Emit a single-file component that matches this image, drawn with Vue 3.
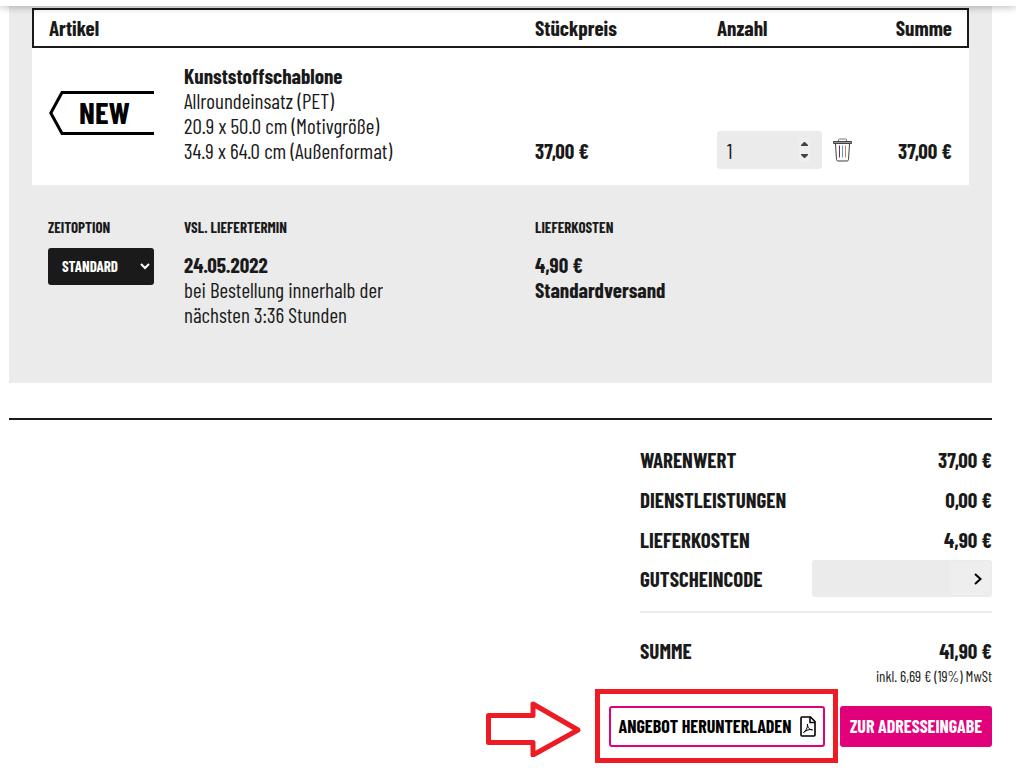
<script setup>
import { ref } from 'vue'

const quantity = ref(1)
const timeOption = ref('STANDARD')
const voucher = ref('')
const totals = [
  { label: 'WARENWERT', value: '37,00 €' },
  { label: 'DIENSTLEISTUNGEN', value: '0,00 €' },
  { label: 'LIEFERKOSTEN', value: '4,90 €' },
]
</script>

<template>
  <div class="page">
    <header class="topbar"></header>
    <main class="content">
      <section class="panel">
        <table class="cart">
          <colgroup>
            <col class="col-image" />
            <col />
            <col class="col-price" />
            <col class="col-qty" />
            <col class="col-sum" />
          </colgroup>
          <thead>
            <tr>
              <th colspan="2" scope="col">Artikel</th>
              <th scope="col">Stückpreis</th>
              <th scope="col">Anzahl</th>
              <th scope="col" class="right">Summe</th>
            </tr>
          </thead>
          <tbody>
            <tr>
              <td class="image-cell">
                <svg class="product" width="105" height="46" viewBox="0 0 105 46" role="img" aria-label="NEW">
                  <path d="M105 1.500H13L1.800 22l11.200 20.500H105" fill="none" stroke="#000" stroke-width="3" />
                  <text x="30" y="33" class="product-text">NEW</text>
                </svg>
              </td>
              <td>
                <strong>Kunststoffschablone</strong><br />
                Allroundeinsatz (PET)<br />
                20.9 x 50.0 cm (Motivgröße)<br />
                34.9 x 64.0 cm (Außenformat)
              </td>
              <td><strong>37,00 €</strong></td>
              <td class="qty-cell">
                <div class="qty">
                  <div class="stepper">
                    <input v-model="quantity" type="number" min="1" aria-label="Anzahl" />
                    <div class="steps">
                      <button type="button" aria-label="Mehr" @click="quantity++">
                        <svg width="7" height="4" viewBox="0 0 7 4"><path d="M0 4V3L3 0h1l3 3v1z" fill="#444" /></svg>
                      </button>
                      <button type="button" aria-label="Weniger" @click="quantity = Math.max(1, quantity - 1)">
                        <svg width="7" height="4" viewBox="0 0 7 4"><path d="M0 0v1l3 3h1l3-3V0z" fill="#444" /></svg>
                      </button>
                    </div>
                  </div>
                  <button type="button" class="trash" aria-label="Artikel entfernen">
                    <svg width="20" height="24" viewBox="0 0 20 24" fill="none" stroke="#444">
                      <path d="M5.500 3V2q0-1 1-1h6q1 0 1 1v1" stroke="#777" />
                      <path d="M.5 3.500h18v2H.5z" fill="#999" />
                      <path d="M2.500 6l1 15.500q.1 1.500 1.500 1.500h9q1.400 0 1.500-1.500l1-15.500" />
                      <path d="M4.500 22.500h10" stroke="#999" />
                      <path d="M6.500 7.500v12" stroke="#703070" />
                      <path d="M12.500 7.500v12" stroke="#c08a50" />
                      <path d="M9.500 7.500v12" stroke="#4f9fe0" />
                    </svg>
                  </button>
                </div>
              </td>
              <td class="right"><strong>37,00 €</strong></td>
            </tr>
          </tbody>
        </table>

        <div class="options">
          <div>
            <label class="caption" for="time-option">ZEITOPTION</label>
            <div class="select">
              <select id="time-option" v-model="timeOption">
                <option>STANDARD</option>
              </select>
              <svg width="10" height="7" viewBox="0 0 10 7" fill="none" stroke="#fff" stroke-width="2">
                <path d="M1 1l4 4 4-4" />
              </svg>
            </div>
          </div>
          <div>
            <h2 class="caption">VSL. LIEFERTERMIN</h2>
            <p><strong>24.05.2022</strong><br />bei Bestellung innerhalb der<br />nächsten 3:36 Stunden</p>
          </div>
          <div>
            <h2 class="caption">LIEFERKOSTEN</h2>
            <p><strong>4,90 €<br />Standardversand</strong></p>
          </div>
        </div>
      </section>

      <section class="checkout">
        <div class="summary">
          <div v-for="row in totals" :key="row.label" class="row">
            <span>{{ row.label }}</span>
            <span>{{ row.value }}</span>
          </div>
          <div class="row voucher">
            <label for="voucher">GUTSCHEINCODE</label>
            <div class="voucher-field">
              <input id="voucher" v-model="voucher" type="text" />
              <button type="button" aria-label="Gutschein einlösen">
                <svg width="8" height="12" viewBox="0 0 8 12" fill="none" stroke="#000" stroke-width="2">
                  <path d="M1 1l5.500 5L1 11" />
                </svg>
              </button>
            </div>
          </div>
          <div class="total">
            <span>SUMME</span>
            <span>41,90 €</span>
          </div>
          <p class="tax">inkl. 6,69 € (19%) MwSt</p>
        </div>

        <div class="actions">
          <div class="marked">
            <button type="button" class="btn outline">
              <span>ANGEBOT HERUNTERLADEN</span>
              <svg width="16" height="21" viewBox="0 0 16 21" fill="none" stroke="#000" stroke-width="1.600">
                <path d="M1 2q0-1 1-1h8.500L15 5.500V19q0 1-1 1H2q-1 0-1-1z" />
                <path d="M10 1v5.500h5" stroke-width="1.500" />
                <path d="M3.500 16.500c2-1 4.500-5 4-8.500c0 4 2.500 6 5 5.800c-3-.8-6 .2-9 2.700z" stroke-width="1" />
              </svg>
            </button>
            <div class="frame"></div>
            <svg class="arrow" width="95" height="56" viewBox="0 0 95 56" fill="none" stroke="#ed1c24" stroke-width="5" stroke-linejoin="round">
              <path d="M2.500 14.500H47V3l45 26-45 25V41.500H2.500z" />
            </svg>
          </div>
          <button type="button" class="btn primary">ZUR ADRESSEINGABE</button>
        </div>
      </section>
    </main>
  </div>
</template>

<style>
body {
  margin: 0;
  background: #fff;
}
</style>

<style scoped>
.page {
  color: #1a1a1a;
  font-family: "Barlow Condensed", "Liberation Sans Narrow", "Roboto Condensed", Roboto, sans-serif;
  font-size: 21px;
  font-weight: 400;
  line-height: 25px;
}
strong,
th {
  font-weight: 700;
}
.topbar {
  position: relative;
  z-index: 1;
  height: 6px;
  background: #fff;
  box-shadow: 0 0 8px rgba(0, 0, 0, 0.4);
}
.content {
  padding: 0 24px 0 9px;
}
.panel {
  padding: 2px 23px 56px;
  background: #ebebeb;
}
.cart {
  width: 100%;
  table-layout: fixed;
  border-spacing: 0;
  background: #fff;
}
.col-image { width: 152px; }
.col-price { width: 182px; }
.col-qty { width: 150px; }
.col-sum { width: 102px; }
th {
  height: 34px;
  padding: 0 0 2px;
  border: solid #1a1a1a;
  border-width: 2px 0;
  text-align: left;
}
th:first-child {
  padding-left: 15px;
  border-left-width: 2px;
}
th:last-child {
  padding-right: 15px;
  border-right-width: 2px;
}
td {
  padding: 15px 0 22px;
  vertical-align: bottom;
}
td:last-child {
  padding-right: 17px;
}
.right {
  text-align: right;
}
td.image-cell {
  padding: 16px 0 21px 17px;
  vertical-align: middle;
}
.product {
  display: block;
}
.product-text {
  font-size: 31px;
  font-weight: 700;
}
td.qty-cell {
  padding-bottom: 16px;
}
.qty {
  display: flex;
  align-items: center;
  gap: 11px;
}
.stepper {
  display: flex;
  align-items: center;
  box-sizing: border-box;
  width: 105px;
  height: 38px;
  padding: 0 12px 0 10px;
  border-radius: 3px;
  background: #ebebeb;
}
.stepper input {
  flex: 1;
  min-width: 0;
  padding: 0;
  border: 0;
  background: none;
  color: inherit;
  font: inherit;
  appearance: textfield;
}
.stepper input::-webkit-inner-spin-button {
  display: none;
}
.steps {
  display: grid;
  width: 11px;
  height: 24px;
  background: #efefef;
}
.steps button {
  display: flex;
  align-items: center;
  justify-content: center;
  padding: 0;
  border: 0;
  background: none;
}
.trash {
  display: flex;
  padding: 0;
  border: 0;
  background: none;
}
.options {
  display: grid;
  grid-template-columns: 106px minmax(0, 1fr) 434px;
  column-gap: 30px;
  padding: 32px 0 0 16px;
}
.caption {
  display: block;
  margin: 0;
  font-size: 15px;
  font-weight: 700;
  line-height: 20px;
}
.options p {
  margin: 15px 0 0;
}
.select {
  position: relative;
  margin-top: 11px;
}
.select select {
  display: block;
  width: 100%;
  height: 37px;
  padding: 0 14px;
  appearance: none;
  border: 0;
  border-radius: 3px;
  background: #1a1a1a;
  color: #fff;
  font: inherit;
  font-size: 15px;
  font-weight: 700;
}
.select svg {
  position: absolute;
  top: 15px;
  right: 4px;
  pointer-events: none;
}
.checkout {
  margin-top: 35px;
  padding-top: 19px;
  border-top: 2px solid #1a1a1a;
}
.summary {
  width: 352px;
  margin-left: auto;
  font-weight: 700;
}
.row {
  display: flex;
  justify-content: space-between;
  align-items: center;
  height: 40px;
}
.voucher {
  height: 37px;
  margin-top: 1px;
}
.voucher-field {
  display: flex;
  width: 180px;
  height: 37px;
  border-radius: 3px;
  background: #ebebeb;
}
.voucher-field input {
  flex: 1;
  min-width: 0;
  padding: 0 10px;
  border: 0;
  background: none;
  font: inherit;
}
.voucher-field button {
  display: flex;
  align-items: center;
  justify-content: flex-end;
  width: 40px;
  margin: 2px 1px 2px 0;
  padding: 0 9px;
  border: 0;
  background: #eee;
}
.total {
  display: flex;
  justify-content: space-between;
  margin-top: 14px;
  padding-top: 25px;
  border-top: 2px solid #ebebeb;
}
.tax {
  margin: 4px 0 0;
  font-size: 15px;
  font-weight: 400;
  line-height: 18px;
  text-align: right;
}
.actions {
  display: flex;
  justify-content: flex-end;
  gap: 15px;
  margin-top: 21px;
  padding-bottom: 29px;
}
.marked {
  position: relative;
}
.btn {
  display: flex;
  align-items: center;
  justify-content: center;
  gap: 8px;
  box-sizing: border-box;
  height: 41px;
  padding: 0 7px;
  border: 2px solid #e2007a;
  border-radius: 3px;
  font: inherit;
  font-size: 18px;
  font-weight: 700;
  white-space: nowrap;
}
.outline {
  min-width: 216px;
  background: #fff;
  color: #000;
}
.primary {
  min-width: 152px;
  background: #e2007a;
  color: #fff;
}
.frame {
  position: absolute;
  inset: -17px -13px -16px -14px;
  border: 5px solid #ed1c24;
  pointer-events: none;
}
.arrow {
  position: absolute;
  top: -5px;
  right: calc(100% + 28px);
}
</style>
